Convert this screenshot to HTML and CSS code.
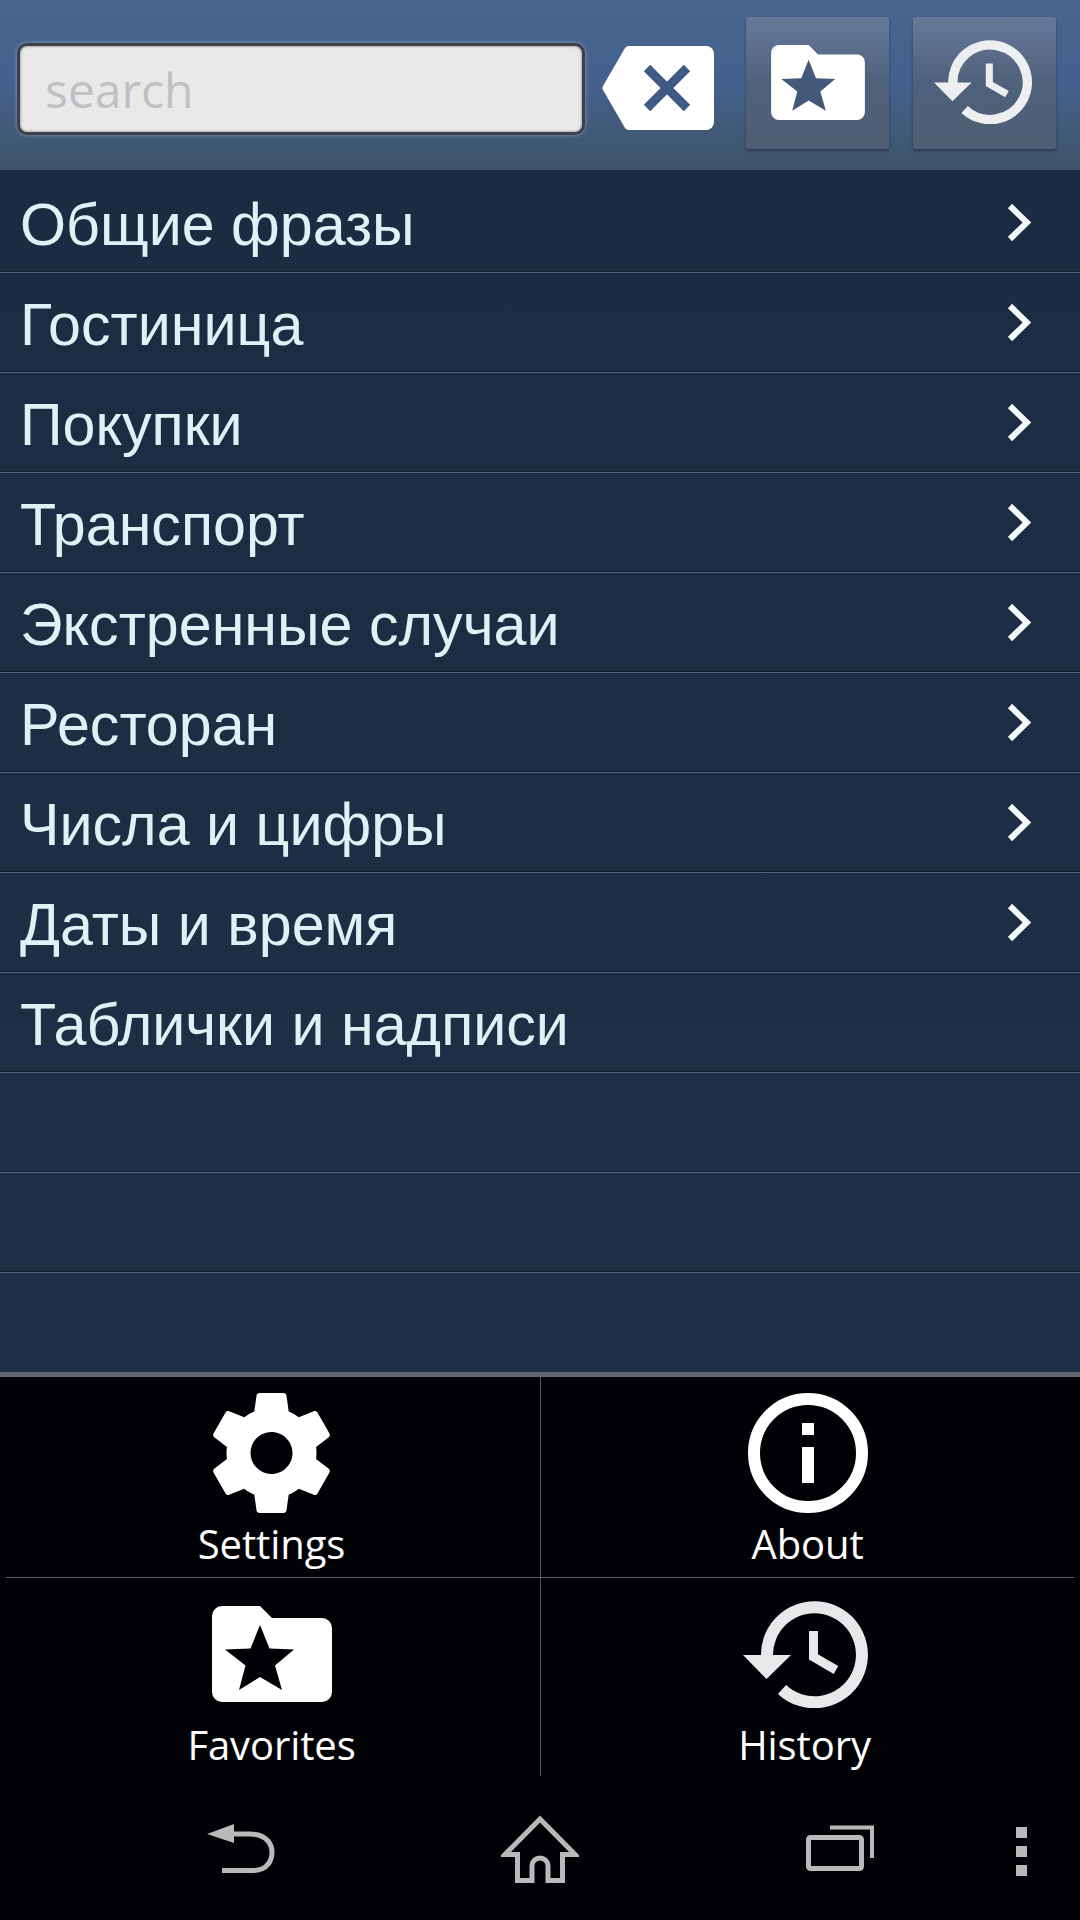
FILE: index.html
```html
<!DOCTYPE html>
<html lang="en">
<head>
  <meta charset="UTF-8" />
  <meta name="viewport" content="width=device-width, initial-scale=1.0"/>
  <title>Phrasebook</title>
  <link rel="stylesheet" href="styles.css">
</head>
<body>

<svg class="defs">
  <defs>
    <g id="folderStar">
      <path fill="#fff" d="M10 0H48L60 12H110a10 10 0 0 1 10 10V86a10 10 0 0 1-10 10H10A10 10 0 0 1 0 86V10A10 10 0 0 1 10 0z"/>
      <path fill="currentColor" d="M48 19L57.500 42.500L82 43.500L63 59.500L70 84L48 71L27 84L33.500 59.500L13 43.500L38.500 42.500z"/>
    </g>
    <g id="history">
      <path fill="none" stroke="currentColor" stroke-width="12" d="M24 56A47.500 47.500 0 1 1 39 88.500"/>
      <path fill="currentColor" d="M0 54H48L23.500 78z"/>
      <path fill="none" stroke="currentColor" stroke-width="9" d="M70.500 30V56L93 69"/>
    </g>
    <polyline id="chevron" points="3,3 20,19.500 3,36" fill="none" stroke="#f3fbfc" stroke-width="6"/>
  </defs>
</svg>

<header class="topbar">
  <div class="search"><span class="placeholder">search</span></div>
  <svg class="clear" width="112" height="84" viewBox="0 0 112 84">
    <path fill="#fff" d="M27 0H104a8 8 0 0 1 8 8V76a8 8 0 0 1-8 8H27a6 6 0 0 1-4-2L1 44a4 4 0 0 1 0-4L23 2a6 6 0 0 1 4-2z"/>
    <path fill="none" stroke="#3f5a85" stroke-width="9" d="M45 22L85 62M85 22L45 62"/>
  </svg>
  <button class="topbtn fav" type="button">
    <svg width="94" height="75" viewBox="0 0 120 96"><use href="#folderStar"/></svg>
  </button>
  <button class="topbtn hist" type="button">
    <svg width="102" height="84" viewBox="0 0 130 107"><use href="#history"/></svg>
  </button>
</header>

<main class="list">
  <div class="row"><span>Общие фразы</span><svg class="chev" viewBox="0 0 24 39"><use href="#chevron"/></svg></div>
  <div class="row"><span>Гостиница</span><svg class="chev" viewBox="0 0 24 39"><use href="#chevron"/></svg></div>
  <div class="row"><span>Покупки</span><svg class="chev" viewBox="0 0 24 39"><use href="#chevron"/></svg></div>
  <div class="row"><span>Транспорт</span><svg class="chev" viewBox="0 0 24 39"><use href="#chevron"/></svg></div>
  <div class="row"><span>Экстренные случаи</span><svg class="chev" viewBox="0 0 24 39"><use href="#chevron"/></svg></div>
  <div class="row"><span>Ресторан</span><svg class="chev" viewBox="0 0 24 39"><use href="#chevron"/></svg></div>
  <div class="row"><span>Числа и цифры</span><svg class="chev" viewBox="0 0 24 39"><use href="#chevron"/></svg></div>
  <div class="row"><span>Даты и время</span><svg class="chev" viewBox="0 0 24 39"><use href="#chevron"/></svg></div>
  <div class="row"><span>Таблички и надписи</span></div>
  <div class="row"></div>
  <div class="row"></div>
</main>

<section class="menu">
  <div class="cell">
    <div class="cell-icon">
      <svg width="117" height="120" viewBox="2.300 2 19.400 20"><path fill="#fff" d="M19.430 12.980c.04-.32.07-.64.07-.98s-.03-.66-.07-.98l2.110-1.650c.19-.15.24-.42.12-.64l-2-3.460c-.12-.22-.39-.3-.61-.22l-2.490 1c-.52-.4-1.080-.73-1.690-.98l-.38-2.650C14.460 2.180 14.250 2 14 2h-4c-.25 0-.46.18-.49.42l-.38 2.650c-.61.25-1.170.59-1.690.98l-2.490-1c-.23-.09-.49 0-.61.22l-2 3.460c-.13.22-.07.49.12.64l2.110 1.650c-.04.32-.07.65-.07.98s.03.66.07.98l-2.110 1.650c-.19.15-.24.42-.12.64l2 3.460c.12.22.39.3.61.22l2.490-1c.52.4 1.080.73 1.690.98l.38 2.650c.03.24.24.42.49.42h4c.25 0 .46-.18.49-.42l.38-2.650c.61-.25 1.170-.59 1.690-.98l2.490 1c.23.09.49 0 .61-.22l2-3.460c.12-.22.07-.49-.12-.64l-2.110-1.650zM12 15.500c-1.930 0-3.500-1.570-3.500-3.500s1.570-3.500 3.500-3.500 3.500 1.570 3.500 3.500-1.570 3.500-3.500 3.500z"/></svg>
    </div>
    <div class="cell-label">Settings</div>
  </div>
  <div class="cell">
    <div class="cell-icon">
      <svg width="120" height="120" viewBox="0 0 120 120">
        <circle cx="60" cy="60" r="54" fill="none" stroke="#fff" stroke-width="12"/>
        <path fill="#fff" d="M54 30H66V42H54zM54 54H66V90H54z"/>
      </svg>
    </div>
    <div class="cell-label">About</div>
  </div>
  <div class="cell">
    <div class="cell-icon">
      <svg class="star-dark" width="120" height="96" viewBox="0 0 120 96"><use href="#folderStar"/></svg>
    </div>
    <div class="cell-label">Favorites</div>
  </div>
  <div class="cell">
    <div class="cell-icon">
      <svg width="130" height="107" viewBox="0 0 130 107"><use href="#history"/></svg>
    </div>
    <div class="cell-label history-label">History</div>
  </div>
</section>

<nav class="navbar">
  <svg class="nav-back" width="68" height="49" viewBox="0 0 68 49">
    <path fill="#b9b9b9" d="M0 10L27 0V19z"/>
    <path fill="none" stroke="#b9b9b9" stroke-width="5" d="M25 10H43C61 10 65 22 65 28C65 36 61 46 47 46.500H15"/>
  </svg>
  <svg class="nav-home" width="78" height="68" viewBox="0 0 78 68">
    <path fill="none" stroke="#b9b9b9" stroke-width="5" d="M16.500 65.500V39.500H4L39 4L74 39.500H61.500V65.500H47V51a8 8 0 0 0-16 0V65.500z"/>
  </svg>
  <svg class="nav-recent" width="69" height="46" viewBox="0 0 69 46">
    <rect x="2.500" y="12.500" width="53" height="31" rx="2" fill="none" stroke="#b9b9b9" stroke-width="5"/>
    <path fill="none" stroke="#b9b9b9" stroke-width="4" d="M24 2.500H66V33"/>
  </svg>
  <div class="nav-dots"><i></i><i></i><i></i></div>
</nav>

</body>
</html>
```

FILE: styles.css
```css
* {
  box-sizing: border-box;
}
body {
  margin: 0;
  width: 1080px;
  height: 1920px;
  overflow: hidden;
  background: #020206;
}
.defs {
  display: none;
}

/* top bar */
.topbar {
  height: 170px;
  display: flex;
  align-items: flex-start;
  padding: 17px 24px 0 17px;
  background: linear-gradient(#47658f 0%, #44608c 50%, #3f5468 100%);
}
.search {
  width: 568px;
  height: 92px;
  margin-top: 26px;
  padding-left: 25px;
  display: flex;
  align-items: center;
  background: #e9e9ea;
  border: 3px solid #3f3f4b;
  border-radius: 10px;
  box-shadow: 0 0 4px rgba(170,180,200,0.7), inset 0 0 3px rgba(0,0,0,0.5);
}
.placeholder {
  font-family: "Open Sans", sans-serif;
  font-size: 48px;
  color: #bfc0c3;
}
.clear {
  margin: 29px 32px 0 17px;
}
.topbtn {
  width: 143px;
  height: 132px;
  padding: 0 0 2px;
  display: flex;
  justify-content: center;
  align-items: center;
  border: none;
  border-radius: 3px;
  background: linear-gradient(#67799a 0%, #4f617b 50%, #4e5f73 100%);
  box-shadow: 0 2px 3px rgba(20,30,50,0.5);
  color: #44597a;
}
.fav {
  margin-right: 24px;
}
.hist {
  color: #eceef0;
}

/* category list */
.list {
  height: 1202px;
  padding-top: 3px;
  background: linear-gradient(#1b2b42, #1e2f46);
}
.row {
  height: 100px;
  padding: 4px 49px 0 20px;
  display: flex;
  justify-content: space-between;
  align-items: center;
  border-bottom: 1px solid #4e6383;
  box-shadow: inset 0 -1px 0 #111c2d;
  font-family: "Liberation Sans", Arial, sans-serif;
  font-size: 59.2px;
  color: #e0f1f6;
}
.chev {
  width: 24px;
  height: 39px;
  margin-top: -4px;
}

/* bottom menu */
.menu {
  height: 404px;
  padding: 0 6px;
  border-top: 5px solid #5f6770;
  display: grid;
  grid-template-columns: 535px 533px;
  grid-template-rows: 201px 198px;
  color: #e8e8ea;
}
.cell {
  padding-top: 16px;
  display: flex;
  flex-direction: column;
  align-items: center;
}
.cell:nth-child(odd) {
  padding-right: 3px;
  border-right: 1px solid #55555a;
}
.cell:nth-child(-n+2) {
  border-bottom: 1px solid #5a5d61;
}
.cell-icon {
  height: 120px;
  display: flex;
  align-items: center;
}
.star-dark {
  color: #020206;
}
.cell-label {
  margin-top: 4px;
  font-family: "Open Sans", sans-serif;
  font-size: 40px;
  letter-spacing: -0.1px;
  line-height: 54px;
  color: #fff;
}
.history-label {
  padding-right: 6px;
}

/* android nav bar */
.navbar {
  height: 144px;
  padding: 39px 0 0 207px;
  display: flex;
  align-items: flex-start;
}
.nav-back {
  margin-right: 226px;
  margin-top: 9px;
}
.nav-home {
  margin-right: 227px;
}
.nav-recent {
  margin-right: 141px;
  margin-top: 10px;
}
.nav-dots {
  margin-top: 12px;
  display: flex;
  flex-direction: column;
  gap: 8px;
}
.nav-dots i {
  display: block;
  width: 11px;
  height: 11px;
  background: #b9b9b9;
}
```
